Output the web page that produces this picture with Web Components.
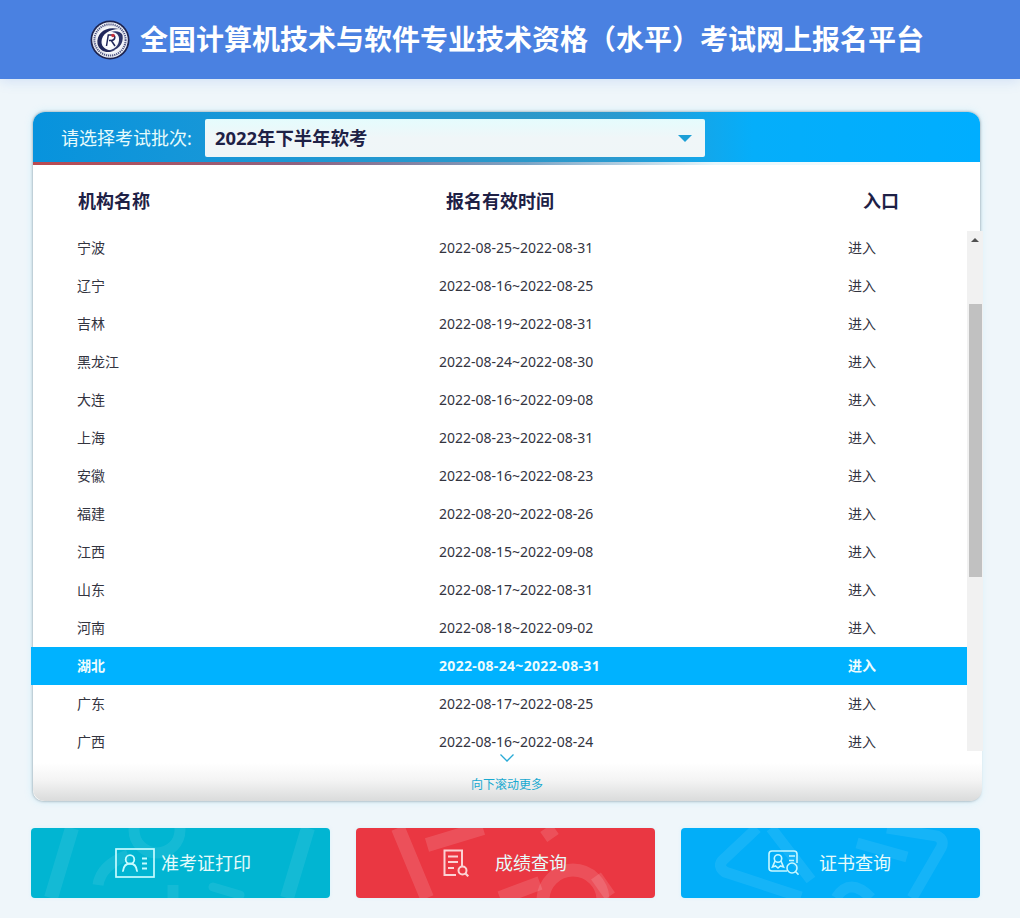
<!DOCTYPE html>
<html lang="zh-CN">
<head>
<meta charset="utf-8">
<title>全国计算机技术与软件专业技术资格（水平）考试网上报名平台</title>
<style>
html,body{margin:0;padding:0;background:#eff6fa;height:918px;overflow:hidden;font-family:"Noto Sans","Noto Sans CJK SC",sans-serif}
x-app{display:block}
</style>
</head>
<body>
<x-app>
  <x-site-header>全国计算机技术与软件专业技术资格（水平）考试网上报名平台</x-site-header>
  <x-main>
    <x-exam-panel label="请选择考试批次:" value="2022年下半年软考" more="向下滚动更多">
      <x-org-row name="宁波" date="2022-08-25~2022-08-31"></x-org-row>
      <x-org-row name="辽宁" date="2022-08-16~2022-08-25"></x-org-row>
      <x-org-row name="吉林" date="2022-08-19~2022-08-31"></x-org-row>
      <x-org-row name="黑龙江" date="2022-08-24~2022-08-30"></x-org-row>
      <x-org-row name="大连" date="2022-08-16~2022-09-08"></x-org-row>
      <x-org-row name="上海" date="2022-08-23~2022-08-31"></x-org-row>
      <x-org-row name="安徽" date="2022-08-16~2022-08-23"></x-org-row>
      <x-org-row name="福建" date="2022-08-20~2022-08-26"></x-org-row>
      <x-org-row name="江西" date="2022-08-15~2022-09-08"></x-org-row>
      <x-org-row name="山东" date="2022-08-17~2022-08-31"></x-org-row>
      <x-org-row name="河南" date="2022-08-18~2022-09-02"></x-org-row>
      <x-org-row name="湖北" date="2022-08-24~2022-08-31" active></x-org-row>
      <x-org-row name="广东" date="2022-08-17~2022-08-25"></x-org-row>
      <x-org-row name="广西" date="2022-08-16~2022-08-24"></x-org-row>
    </x-exam-panel>
    <x-actions>
      <x-action-button kind="ticket">准考证打印</x-action-button>
      <x-action-button kind="score">成绩查询</x-action-button>
      <x-action-button kind="cert">证书查询</x-action-button>
    </x-actions>
  </x-main>
</x-app>
<script>
const FONT='"Noto Sans","Noto Sans CJK SC",sans-serif';
function def(name,html){
  customElements.define(name,class extends HTMLElement{
    constructor(){super();this.attachShadow({mode:'open'}).innerHTML=typeof html==='function'?html(this):html;}
  });
}
def('x-site-header',`<style>
:host{display:flex;align-items:center;justify-content:center;gap:10px;height:79px;padding-right:6px;box-sizing:border-box;background:#4a81e1;box-shadow:0 2px 12px rgba(74,129,225,.18);color:#fff;position:relative}
.t{font:700 28px/40px ${FONT};white-space:nowrap;margin-top:-1px}
svg{width:40px;height:40px;flex:none;display:block}
</style>
<svg viewBox="0 0 40 40" aria-hidden="true">
<circle cx="20" cy="20" r="19.500" fill="#1c2350"/>
<circle cx="20" cy="20" r="17.800" fill="#eceef4"/>
<circle cx="20" cy="20" r="15.600" fill="none" stroke="#4d5483" stroke-width="2" stroke-dasharray="1.200 .9"/>
<circle cx="20" cy="20" r="13.200" fill="#f7f8fb"/>
<path d="M7.500 24C6 13 16 5.500 29 9 20 9 11.500 14 11.500 22c0 6 6.500 9.500 13.500 8-7 4.500-15.500 1.500-17.500-6z" fill="#20275a"/>
<path d="M32.500 15c2 10-7 18.500-18.500 15.500 8 1 16-4 15-12.500-.5-4-4-6-8-6 5-2 10.300 0 11.500 3z" fill="#2d3568"/>
<ellipse cx="20" cy="20" rx="7.500" ry="7" fill="#fff"/>
<path d="M16.500 26l1.800-11h4c3.500 0 3.500 5-1 5.500L25 26M19 20.500h2" fill="none" stroke="#20275a" stroke-width="1.500"/>
<circle cx="23" cy="15.500" r="1.800" fill="#c8303a"/>
</svg>
<span class="t"><slot></slot></span>`);

def('x-main',`<style>:host{display:block;width:949px;margin-left:31px;padding-top:33px}</style><slot></slot>`);

def('x-exam-panel',el=>`<style>
:host{display:block;position:relative;margin-left:2px;width:947px;height:689px;border-radius:12px 12px 10px 10px;background:#fff;box-shadow:0 0 3px rgba(60,70,80,.55),0 0 8px rgba(120,220,250,.28)}
.head{display:flex;align-items:flex-start;box-sizing:border-box;height:53px;padding:7px 0 0 28px;gap:12px;border-radius:12px 12px 0 0;
 background:linear-gradient(90deg,#0793dd 0,#1c98d6 25%,#2c98c9 52%,#2a9ad0 62%,#05aefa 76%,#00aeff 100%);position:relative;overflow:hidden}
.head::after{content:"";position:absolute;left:0;right:0;bottom:0;height:3px;background:linear-gradient(90deg,#bb4a50 0,#8f6280 28%,#7aa4c6 52%,#e6f6fb 72%,#fff 100%)}
.label{font:400 18px/38px ${FONT};color:#e6fbfb;width:132px;white-space:nowrap}
.sel{width:500px;height:38px;box-sizing:border-box;padding:0 13px 0 10px;display:flex;align-items:center;justify-content:space-between;border-radius:2px;background:linear-gradient(180deg,#e4fcfd,#f0f6f8 50%,#eff6f8);font:700 18.400px/26px ${FONT};color:#1e2146}
.sel i{width:0;height:0;border:7px solid transparent;border-top-color:#1c9fd6;border-bottom:0;margin-top:1px}
.cols{display:grid;grid-template-columns:368px 417px 1fr;height:66px;box-sizing:border-box;padding:23px 0 0 45px;font:700 18px/26px ${FONT};color:#1e2146}
.list{position:relative;display:flex;height:520px;margin:0 -3px 0 -2px;overflow:hidden}
.rows{flex:1;min-width:0;margin-top:-2px}
.bar{flex:none;width:16px;background:#f1f1f1;position:relative;display:flex;flex-direction:column;align-items:stretch}
.up{flex:none;height:17px;display:flex;align-items:center;justify-content:center}
.up i{width:0;height:0;border:4px solid transparent;border-bottom:4px solid #505050;border-top:0}
.spacer{flex:none;height:56px}
.thumb{flex:none;height:273px;margin:0 1px 0 2px;background:#c1c1c1}
.fade{height:50px;display:flex;flex-direction:column;align-items:center;box-sizing:border-box;margin-right:-2px;padding-right:1px;border-radius:0 0 12px 12px;background:linear-gradient(180deg,#fff 0,#fff 24%,#f4f4f4 58%,#dadbdb 100%);position:relative}
.fade svg{display:block;margin-top:1px;flex:none}
.more{font:400 12px/16px ${FONT};color:#18a9d0;margin-top:13px;white-space:nowrap}
</style>
<div class="head"><span class="label">${el.getAttribute('label')}</span><div class="sel"><span>${el.getAttribute('value')}</span><i></i></div></div>
<div class="cols"><span>机构名称</span><span>报名有效时间</span><span>入口</span></div>
<div class="list"><div class="rows"><slot></slot></div>
<div class="bar"><div class="up"><i></i></div><div class="spacer"></div><div class="thumb"></div></div></div>
<div class="fade"><svg width="16" height="12" viewBox="0 0 16 12"><path d="M1.500 2.500L8 9l6.500-6.500" fill="none" stroke="#28aad6" stroke-width="1.300"/></svg><span class="more">${el.getAttribute('more')}</span></div>`);

def('x-org-row',el=>{const a=el.hasAttribute('active');return `<style>
:host{display:grid;grid-template-columns:362px 409px 1fr;height:38px;box-sizing:border-box;padding-left:46px;align-items:center;font:${a?700:400} 14px/20px ${FONT};color:${a?'#eefcfd':'#33343f'};${a?'background:#00b2ff;':''}white-space:nowrap}
.d{${a?'letter-spacing:.33px;':''}}
</style><span>${el.getAttribute('name')}</span><span class="d">${el.getAttribute('date')}</span><span>进入</span>`;});

def('x-actions',`<style>:host{display:flex;gap:26px;margin-top:27px}</style><slot></slot>`);

const ART={
ticket:{bg:'#01b5d2',fg:'#c6fbff',pad:'0 0 0 84px',gap:'6px',
 mark:`<path d="M41 0L20 70M277 0L256 70" stroke-width="14"/><circle cx="126" cy="2" r="23" stroke-width="11"/><path d="M67 57c2-14 14-24 30-30M142 70V57" stroke-width="11"/><path d="M182 59l27 8" stroke-width="9" stroke-linecap="round"/>`,
 icon:`<svg width="40" height="30" viewBox="0 0 40 30" fill="none" stroke="currentColor"><rect x="1" y="1" width="38" height="28" stroke-width="1.700"/><circle cx="15" cy="11.500" r="4.300" stroke-width="1.800"/><path d="M8 23c.6-5 3.500-7.500 7-7.500s6.400 2.500 7 7.500" stroke-width="1.800" stroke-linecap="round"/><path d="M27 10.500h5M27 15.500h5M27 20.500h5" stroke-width="2"/></svg>`},
score:{bg:'#ea3742',fg:'#fbd2d4',pad:'0 0 0 87px',gap:'26px',
 mark:`<path d="M42 0L71 70M71 17L127 0M144 70L184 55M190 0l7 10" stroke-width="14"/><circle cx="217" cy="72" r="30" stroke-width="13"/><path d="M240 48l14 20" stroke-width="12"/>`,
 icon:`<svg width="26" height="28" viewBox="0 0 26 28" fill="none" stroke="currentColor" stroke-width="2"><path d="M19 17V1.500H1.500V26H13"/><path d="M5 7.500h10M5 13h10M5 19h6"/><circle cx="19.500" cy="21.500" r="4"/><path d="M22.500 24.500l2.800 2.800" stroke-width="2.200"/></svg>`},
cert:{bg:'#02aef8',fg:'#c7f7ff',pad:'0 0 0 87px',gap:'20px',
 mark:`<path d="M76 0L42 32Q36 38 44 44L120 69M206 0L256 8Q264 12 260 20L231 70" stroke-width="11"/><path d="M90 0l40 52M155 70Q169 48 190 70" stroke-width="11"/><path d="M176 15l50 14" stroke-width="11"/>`,
 icon:`<svg width="31" height="26" viewBox="0 0 31 26" fill="none" stroke="currentColor" stroke-width="1.600"><path d="M19 21H4a3 3 0 0 1-3-3V4a3 3 0 0 1 3-3h22a3 3 0 0 1 3 3v9"/><circle cx="10" cy="8.500" r="3.700"/><path d="M7 11l-2.500 6 3-1 2.500 2 2.500-2 3 1-2.500-6"/><path d="M21 6h6M21 10.500h5"/><circle cx="24" cy="18" r="5"/><path d="M27.500 21.500l3 3.200"/></svg>`}
};
def('x-action-button',el=>{const k=ART[el.getAttribute('kind')];return `<style>
:host{display:flex;align-items:center;position:relative;overflow:hidden;flex:0 0 299px;height:70px;box-sizing:border-box;border-radius:4px;background:${k.bg};padding:${k.pad};gap:${k.gap};color:${k.fg};cursor:pointer;box-shadow:0 0 3px rgba(190,245,255,.5)}
.mark{position:absolute;left:0;top:0;width:100%;height:100%;fill:none;stroke:#fff;stroke-opacity:${el.getAttribute('kind')==='score'?.13:.08}}
.ic{position:relative;flex:none;display:flex}
.tx{position:relative;font:400 18px/26px ${FONT};color:#e6fbfb;white-space:nowrap}
</style><svg class="mark" viewBox="0 0 299 70">${k.mark}</svg><span class="ic">${k.icon}</span><span class="tx"><slot></slot></span>`;});
</script>
</body>
</html>
